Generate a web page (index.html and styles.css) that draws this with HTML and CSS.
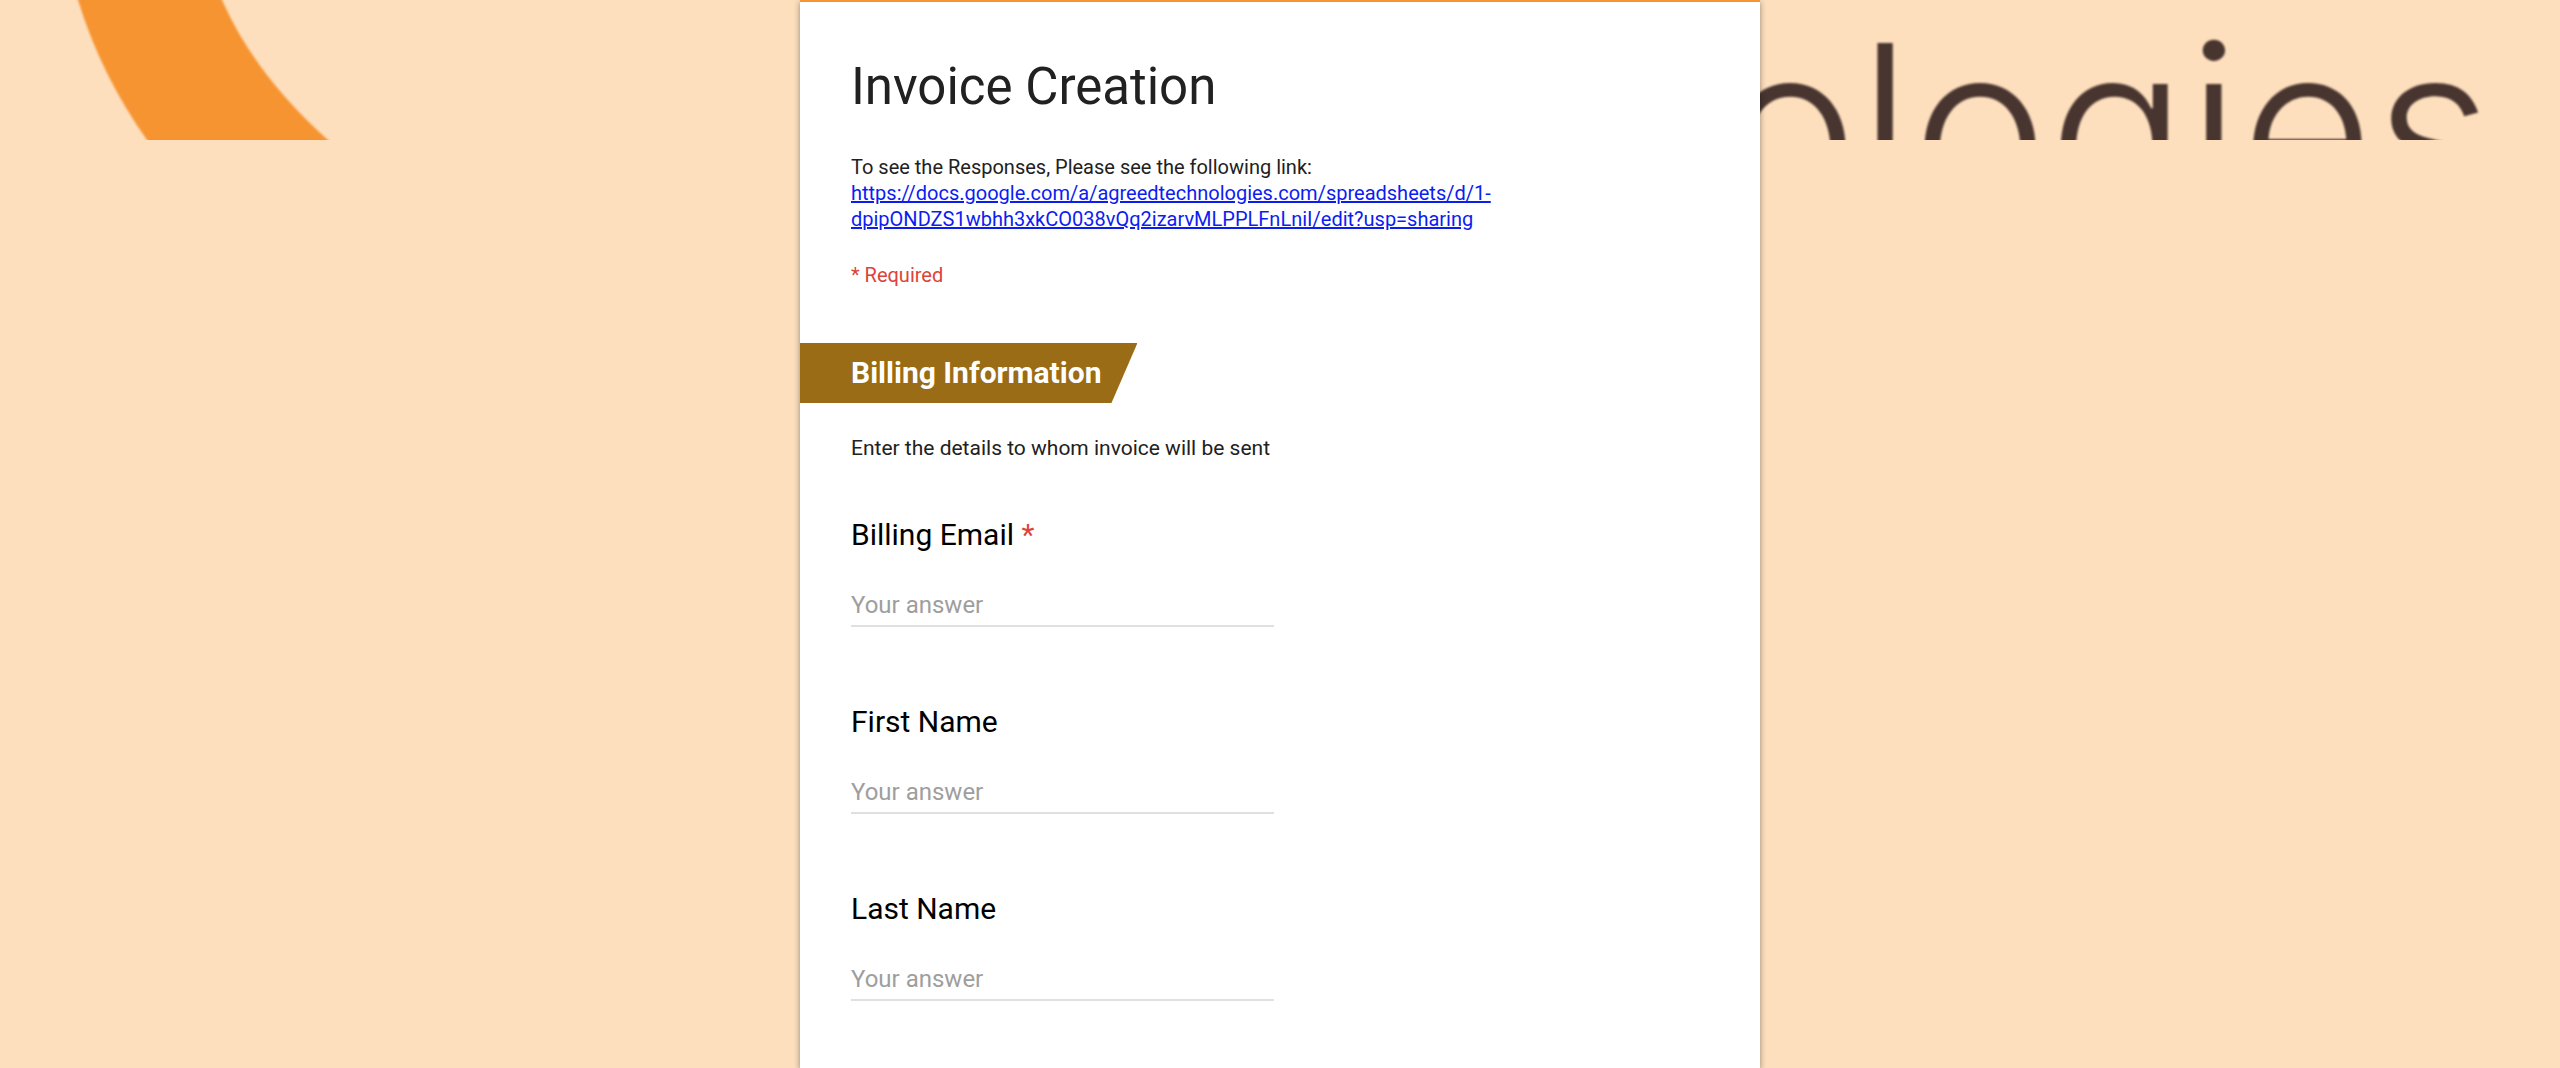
FILE: index.html
```html
<!DOCTYPE html>
<html lang="en">
<head>
<meta charset="utf-8">
<meta name="viewport" content="width=device-width, initial-scale=1">
<title>Invoice Creation</title>
<link rel="stylesheet" href="styles.css">
</head>
<body class="page">
  <header class="banner">
    <svg class="banner-mark" viewBox="0 0 400 140" aria-hidden="true">
      <path d="M78 0Q101 75 147 140L152 147H338L328 140Q255 75 222 0L218-10H75Z"/>
    </svg>
    <svg class="banner-name" viewBox="0 0 760 140" role="img" aria-label="ologies">
      <text class="banner-word" x="-38" y="210">ologies</text>
    </svg>
  </header>
  <main class="card">
    <form class="form">
      <h1 class="title">Invoice Creation</h1>
      <p class="description">To see the Responses, Please see the following link:<br>
        <a class="link" href="https://docs.google.com/a/agreedtechnologies.com/spreadsheets/d/1-dpipONDZS1wbhh3xkCO038vQq2izarvMLPPLFnLniI/edit?usp=sharing">https://docs.google.com/a/agreedtechnologies.com/spreadsheets/d/1-<br>dpipONDZS1wbhh3xkCO038vQq2izarvMLPPLFnLniI/edit?usp=sharing</a></p>
      <p class="required-note">* Required</p>
      <h2 class="section-title">Billing Information</h2>
      <p class="section-text">Enter the details to whom invoice will be sent</p>
      <div class="questions">
        <div class="question">
          <label class="label" for="email">Billing Email <span class="star">*</span></label>
          <input class="answer" id="email" type="email" placeholder="Your answer" required>
        </div>
        <div class="question">
          <label class="label" for="first-name">First Name</label>
          <input class="answer" id="first-name" type="text" placeholder="Your answer">
        </div>
        <div class="question">
          <label class="label" for="last-name">Last Name</label>
          <input class="answer" id="last-name" type="text" placeholder="Your answer">
        </div>
      </div>
    </form>
  </main>
</body>
</html>
```
FILE: styles.css
```css
* {
  box-sizing: border-box;
}

.page {
  margin: 0;
  min-height: 100vh;
  display: grid;
  grid-template: 1fr / 100%;
  background: #fddfbd;
  color: #212121;
  font-family: Roboto, "Liberation Sans", sans-serif;
}

/* The banner and the card share one grid cell, the card on top. */
.banner,
.card {
  grid-area: 1 / 1;
}

.banner {
  align-self: start;
  display: flex;
  justify-content: space-between;
  height: 140px;
  padding-right: 40px;
  overflow: hidden;
}

.banner-mark,
.banner-name {
  height: 140px;
  overflow: hidden;
}

.banner-mark path {
  fill: #f69431;
  filter: blur(1px);
}

.banner-word {
  fill: #483530;
  font-family: Inter, sans-serif;
  font-size: 230px;
  font-weight: 350;
  filter: blur(1px);
}

.card {
  justify-self: center;
  width: 100%;
  max-width: 960px;
  z-index: 1;
  padding: 51px 51px 40px;
  border-top: 2px solid #f69431;
  background: #fff;
  box-shadow: 0 2px 6px rgba(0, 0, 0, 0.4);
}

.title {
  margin: 0 0 33px;
  font-size: 51px;
  font-weight: 400;
  line-height: 68px;
}

.description,
.required-note {
  margin: 0 0 30px;
  font-size: 20px;
  line-height: 26px;
}

.link {
  color: #0b1df0;
  text-decoration-thickness: 2px;
}

.required-note {
  margin-bottom: 55px;
  color: #db4437;
}

.section-title {
  width: fit-content;
  margin: 0 0 31px -51px;
  padding: 0 36px 0 51px;
  background: #996c15;
  clip-path: polygon(0 0, 100% 0, calc(100% - 26px) 100%, 0 100%);
  color: #fff;
  font-size: 30px;
  font-weight: 700;
  line-height: 60px;
}

.section-text {
  margin: 0 0 53px;
  font-size: 21px;
  line-height: 28px;
}

.questions {
  display: grid;
  gap: 75px;
}

.question {
  display: grid;
  gap: 32px;
}

.label {
  color: #000;
  font-size: 30px;
  line-height: 40px;
}

.star {
  color: #db4437;
}

.answer {
  width: 50%;
  max-width: 423px;
  height: 40px;
  padding: 0 0 2px;
  border: 0;
  border-bottom: 2px solid #e0e0e0;
  border-radius: 0;
  background: transparent;
  color: #212121;
  font: 24px/36px Roboto, "Liberation Sans", sans-serif;
  outline: 0;
}

.answer::placeholder {
  color: #9e9e9e;
  opacity: 1;
}
```
